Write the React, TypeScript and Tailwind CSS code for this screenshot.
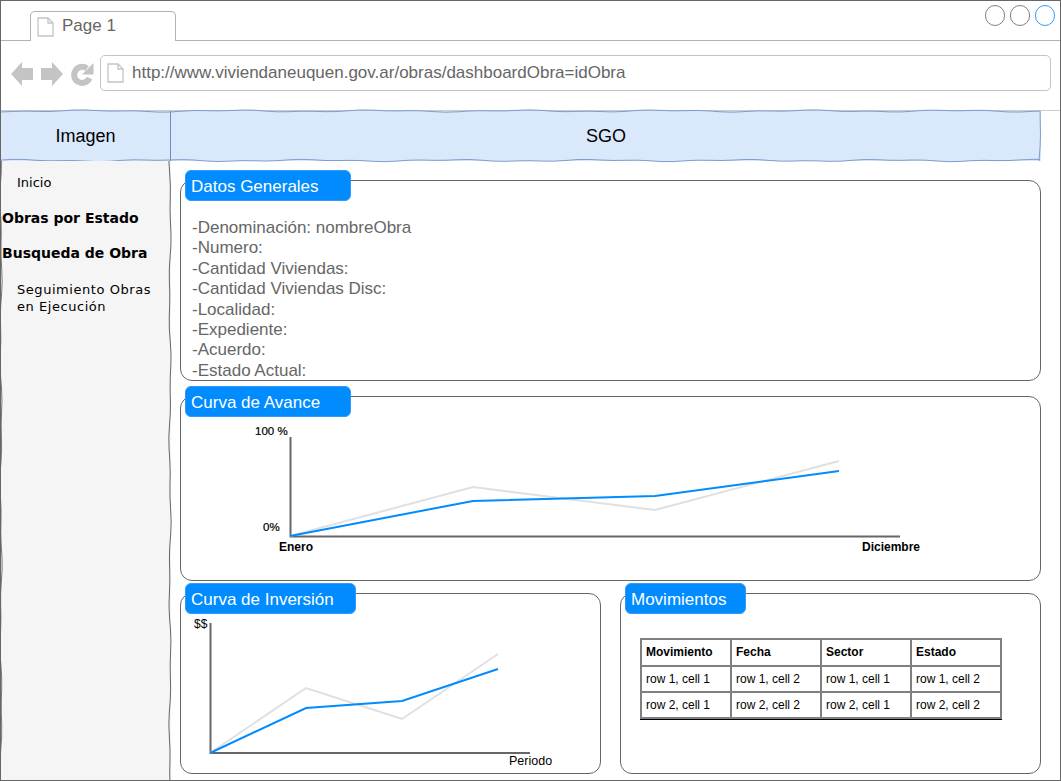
// App.tsx
const SANS = 'font-["Liberation_Sans",Arial,sans-serif]'

const DATOS = [
  '-Denominación: nombreObra',
  '-Numero:',
  '-Cantidad Viviendas:',
  '-Cantidad Viviendas Disc:',
  '-Localidad:',
  '-Expediente:',
  '-Acuerdo:',
  '-Estado Actual:',
]

const FILAS = [
  ['row 1, cell 1', 'row 1, cell 2', 'row 1, cell 1', 'row 1, cell 2'],
  ['row 2, cell 1', 'row 2, cell 2', 'row 2, cell 1', 'row 2, cell 2'],
]

// hand-drawn edge, same wobble on every render
function wobble(len: number, seed: number, fixed: number, vertical: boolean) {
  const pts: string[] = []
  for (let t = 0; t < len + 12; t += 12) {
    const at = Math.min(t, len)
    const off = 0.7 * Math.sin(at / 23 + seed) + 0.5 * Math.sin(at / 9 + seed * 2.3)
    pts.push(vertical ? `${fixed + off},${at}` : `${at},${fixed + off}`)
  }
  return pts.join(' ')
}

function DocIcon({ className }: { className: string }) {
  return (
    <svg viewBox="0 0 17 20" className={className} fill="#fff" stroke="#c4c4c4" strokeWidth="1.3">
      <path d="M1 1 H11 L16 6 V19 H1 Z" />
      <path d="M11 1 V6 H16" fill="none" />
    </svg>
  )
}

function NavIcons() {
  return (
    <svg width="84" height="26" viewBox="0 0 84 26" className="mt-[6px] shrink-0" fill="#c4c4c4">
      <path d="M0 13 L11 1 V7 H22 V19 H11 V25 Z" />
      <path d="M30 7 H41 V1 L52 13 L41 25 V19 H30 Z" />
      <path d="M78.5 17 A8 8 0 1 1 76 7.5" fill="none" stroke="#c4c4c4" strokeWidth="6" />
      <path d="M82.5 2 V13.5 H71 Z" />
    </svg>
  )
}

function Panel({ title, tabWidth, className, children }: {
  title: string
  tabWidth: string
  className: string
  children: React.ReactNode
}) {
  return (
    <section className={`relative rounded-[12px] border border-[#666666] bg-white ${className}`}>
      <div className={`absolute left-[4px] top-[-11px] h-[31px] rounded-[6px] border border-[#3399ff] bg-[#008cff] pl-[5px] text-[17px] leading-[31px] text-white ${tabWidth}`}>
        {title}
      </div>
      {children}
    </section>
  )
}

function Polyline({ points, color }: { points: string; color: string }) {
  return <polyline points={points} fill="none" stroke={color} strokeWidth="2" />
}

function AvanceChart() {
  return (
    <svg width="859" height="182" viewBox="181 397 859 182" className="block">
      <g fontFamily="Liberation Sans, Arial, sans-serif" fontSize="12" fill="#000">
        <text x="255" y="435" fontSize="11.5" stroke="#000" strokeWidth="0.2">100 %</text>
        <text x="263" y="531" fontSize="11.5" stroke="#000" strokeWidth="0.2">0%</text>
        <text x="279" y="551" fontWeight="bold">Enero</text>
        <text x="862" y="551" fontWeight="bold">Diciembre</text>
      </g>
      <path d="M290.5 437 V536.5 H900" fill="none" stroke="#666666" strokeWidth="2" />
      <Polyline points="290,536 473,487 655,510 839,461" color="#e0e0e0" />
      <Polyline points="290,536 473,501 655,496 839,471" color="#008cff" />
    </svg>
  )
}

function InversionChart() {
  return (
    <svg width="419" height="178" viewBox="181 594 419 178" className="block">
      <g fontFamily="Liberation Sans, Arial, sans-serif" fontSize="12" fill="#000">
        <text x="194" y="628">$$</text>
        <text x="509" y="765" fontSize="12.5">Periodo</text>
      </g>
      <path d="M210.5 623 V753 H530" fill="none" stroke="#666666" strokeWidth="2" />
      <Polyline points="210,753 306,688 402,719 498,654" color="#e0e0e0" />
      <Polyline points="210,753 306,708 402,701 498,669" color="#008cff" />
    </svg>
  )
}

function MovimientosTable() {
  const cell = 'border-2 border-[#808080] pl-[4px] text-left align-middle text-[12px] text-black'
  return (
    <table className="ml-[19px] mt-[44px] w-[362px] table-fixed border-collapse shadow-[0_1px_0_#000000]">
      <thead>
        <tr className="h-[27px]">
          {['Movimiento', 'Fecha', 'Sector', 'Estado'].map(h => (
            <th key={h} className={`${cell} pb-[2px] font-bold`}>{h}</th>
          ))}
        </tr>
      </thead>
      <tbody>
        {FILAS.map((fila, i) => (
          <tr key={i} className="h-[26px]">
            {fila.map((c, j) => <td key={j} className={cell}>{c}</td>)}
          </tr>
        ))}
      </tbody>
    </table>
  )
}

export default function App() {
  return (
    <div className={`flex h-[781px] w-[1061px] flex-col overflow-hidden border border-[#666666] bg-white ${SANS}`}>

      {/* tab strip */}
      <div className="relative flex h-[40px] shrink-0 border-b border-[#b3b3b3] pl-[29px] pt-[10px]">
        <div className="mb-[-1px] flex h-[30px] w-[146px] items-center gap-[8px] rounded-t-[5px] border-x border-t border-[#b3b3b3] bg-white pl-[6px] text-[17px] text-[#666666]">
          <DocIcon className="h-[20px] w-[17px]" />
          <span className="mt-[-2px]">Page 1</span>
        </div>
        <div className="absolute right-[5px] top-[4px] flex gap-[5px]">
          <span className="h-[21px] w-[20px] rounded-full border border-[#808080]" />
          <span className="h-[21px] w-[20px] rounded-full border border-[#808080]" />
          <span className="h-[21px] w-[20px] rounded-full border border-[#3399ff]" />
        </div>
      </div>

      {/* address bar */}
      <div className="flex h-[70px] shrink-0 items-start border-b border-[#cccccc] pl-[10px] pr-[9px] pt-[14px]">
        <NavIcons />
        <div className="ml-[5px] flex h-[36px] flex-1 items-center gap-[8px] rounded-[5px] border border-[#c4c4c4] pl-[6px] text-[17px] text-[#666666]">
          <DocIcon className="h-[20px] w-[17px]" />
          http://www.viviendaneuquen.gov.ar/obras/dashboardObra=idObra
        </div>
      </div>

      {/* SGO header */}
      <header className="relative mr-[19px] flex h-[50px] shrink-0 bg-[#dae8fc] text-[18px] text-black">
        <div className="flex w-[170px] items-center justify-center border-r border-[#6c8ebf]">Imagen</div>
        <div className="flex flex-1 items-center justify-center">SGO</div>
        <svg width="1042" height="54" className="absolute left-0 top-[-2px]" fill="none" stroke="#7f9ccb">
          <polyline points={wobble(1039, 1, 2, false)} />
          <polyline points={wobble(1039, 4, 51.5, false)} />
          <polyline points={wobble(50, 2, 1039, true)} transform="translate(0 2)" />
        </svg>
      </header>

      <div className="flex min-h-0 flex-1">
        {/* sidebar */}
        <nav className='relative w-[170px] shrink-0 border-r border-[#f5f5f5] bg-[#f5f5f5] font-["DejaVu_Sans",Verdana,sans-serif] text-[13px] leading-[17px] text-black'>
          <p className="pl-[16px] pt-[13px]">Inicio</p>
          <p className="pl-[1px] pt-[19px] text-[14px] font-bold">Obras por Estado</p>
          <p className="pl-[1px] pt-[18px] text-[14px] font-bold">Busqueda de Obra</p>
          <p className="pl-[16px] pr-[12px] pt-[19px] tracking-[0.55px]">Seguimiento Obras en Ejecución</p>
          <svg width="4" height="620" className="absolute left-[-1px] top-0" fill="none" stroke="#777777">
            <polyline points={wobble(620, 3, 1, true)} />
          </svg>
          <svg width="6" height="620" className="absolute right-[-3px] top-0" fill="none" stroke="#666666">
            <polyline points={wobble(620, 5, 3, true)} />
          </svg>
        </nav>

        {/* content */}
        <main className="flex flex-1 flex-col gap-[15px] pl-[9px] pr-[19px] pt-[19px]">
          <Panel title="Datos Generales" tabWidth="w-[166px]" className="h-[201px]">
            <div className="pl-[11px] pt-[37px] text-[17px] leading-[20.4px] text-[#666666]">
              {DATOS.map(d => <p key={d}>{d}</p>)}
            </div>
          </Panel>

          <Panel title="Curva de Avance" tabWidth="w-[166px]" className="h-[185px]">
            <AvanceChart />
          </Panel>

          <div className="mt-[-3px] flex gap-[19px]">
            <Panel title="Curva de Inversión" tabWidth="w-[171px]" className="h-[181px] flex-1">
              <InversionChart />
            </Panel>
            <Panel title="Movimientos" tabWidth="w-[121px]" className="h-[181px] flex-1">
              <MovimientosTable />
            </Panel>
          </div>
        </main>
      </div>
    </div>
  )
}
